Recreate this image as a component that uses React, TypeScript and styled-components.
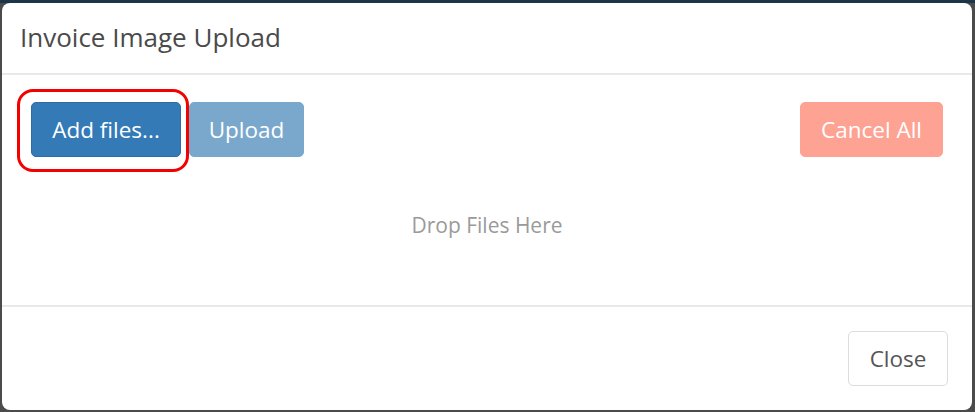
import styled, { createGlobalStyle } from "styled-components";

const GlobalStyle = createGlobalStyle`
  html, body {
    margin: 0;
    padding: 0;
    height: 412px;
    overflow: hidden;
    background: linear-gradient(to bottom, #1c3548 0, #1c3548 3px, #4b4b4b 3px);
    font-family: "Open Sans", "Liberation Sans", sans-serif;
  }
`;

const Modal = styled.div`
  box-sizing: border-box;
  margin: 3px 3px 0 2px;
  height: 407px;
  background: #fff;
  border-radius: 8px;
  display: flex;
  flex-direction: column;
`;

const Header = styled.div`
  height: 72px;
  padding: 0 18px 3px 18px;
  box-sizing: border-box;
  display: flex;
  align-items: center;
  border-bottom: 2px solid #e9e9e9;
`;

const Title = styled.h4`
  margin: 0;
  font-size: 26px;
  font-weight: 400;
  color: #4a4a4a;
`;

const Body = styled.div`
  flex: 1;
  padding: 27px 29px 0 29px;
  display: flex;
  flex-direction: column;
`;

const Toolbar = styled.div`
  display: flex;
  align-items: center;
  gap: 8px;
`;

const Spacer = styled.div`
  flex: 1;
`;

type Variant = "primary" | "muted" | "danger" | "plain";

const colors: Record<Variant, { bg: string; fg: string; border: string }> = {
  primary: { bg: "#337ab7", fg: "#fff", border: "#2e6da4" },
  muted: { bg: "#7aa8cc", fg: "#fff", border: "#7aa8cc" },
  danger: { bg: "#fea293", fg: "#fff", border: "#fea293" },
  plain: { bg: "#fff", fg: "#555", border: "#dcdcdc" },
};

const Button = styled.button<{ $variant: Variant; $width: number }>`
  box-sizing: border-box;
  width: ${(p) => p.$width}px;
  height: 55px;
  border-radius: 5px;
  border: 1px solid ${(p) => colors[p.$variant].border};
  background: ${(p) => colors[p.$variant].bg};
  color: ${(p) => colors[p.$variant].fg};
  font-family: "Open Sans", "Liberation Sans", sans-serif;
  font-size: 22.5px;
  padding: 0;
  cursor: pointer;
`;

const Marked = styled.div`
  position: relative;
  display: flex;
`;

// hand-drawn annotation ring around the first button
const Highlight = styled.div`
  position: absolute;
  top: -13px;
  left: -14px;
  right: -8px;
  bottom: -15px;
  border: 3.5px solid #f30000;
  border-radius: 16px;
  pointer-events: none;
`;

const DropZone = styled.div`
  height: 136px;
  display: flex;
  align-items: center;
  justify-content: center;
  font-size: 21px;
  color: #9a9a9a;
`;

const Footer = styled.div`
  height: 105px;
  box-sizing: border-box;
  border-top: 2px solid #e9e9e9;
  display: flex;
  justify-content: flex-end;
  align-items: flex-start;
  padding: 24px 24px 0 0;
`;

export default function App() {
  return (
    <>
      <GlobalStyle />
      <Modal>
        <Header>
          <Title>Invoice Image Upload</Title>
        </Header>
        <Body>
          <Toolbar>
            <Marked>
              <Button $variant="primary" $width={150}>
                Add files...
              </Button>
              <Highlight />
            </Marked>
            <Button $variant="muted" $width={115}>
              Upload
            </Button>
            <Spacer />
            <Button $variant="danger" $width={143}>
              Cancel All
            </Button>
          </Toolbar>
          <DropZone>Drop Files Here</DropZone>
        </Body>
        <Footer>
          <Button $variant="plain" $width={100}>
            Close
          </Button>
        </Footer>
      </Modal>
    </>
  );
}
